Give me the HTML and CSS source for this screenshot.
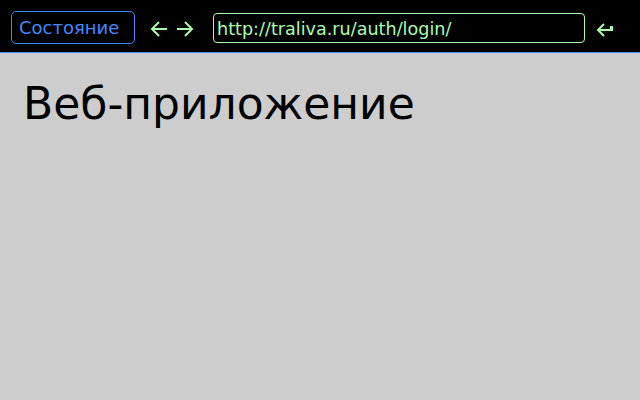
FILE: index.html
```html
<!DOCTYPE html>
<html>
<head>
<meta charset="utf-8">
<link rel="stylesheet" href="styles.css">
</head>
<body>
<header class="bar">
  <button class="state">Состояние</button>
  <div class="nav">
    <svg class="arrow" width="18" height="16" viewBox="0 0 18 16" aria-label="назад"><path d="M2 8H17M9 1L2 8L9 15" fill="none" stroke="#aaffaa" stroke-width="2"/></svg>
    <svg class="arrow" width="18" height="16" viewBox="0 0 18 16" aria-label="вперёд"><path d="M1 8H16M9 1L16 8L9 15" fill="none" stroke="#aaffaa" stroke-width="2"/></svg>
  </div>
  <div class="url">http://traliva.ru/auth/login/</div>
  <svg class="go" width="18" height="16" viewBox="0 0 18 16" aria-label="перейти"><path d="M2 8H16M8 2L2 8L8 14" fill="none" stroke="#aaffaa" stroke-width="2"/><rect x="14" y="4" width="3" height="5" fill="#aaffaa"/></svg>
</header>
<main class="content">
  <h1 class="title">Веб-приложение</h1>
</main>
</body>
</html>
```
FILE: styles.css
```css
html, body {
  margin: 0;
  padding: 0;
  height: 100%;
}
body {
  background: #cdcdcd;
  font-family: "DejaVu Sans", sans-serif;
}
.bar {
  height: 52px;
  background: #000;
  border-bottom: 1px solid #4488ff;
  display: flex;
  align-items: flex-start;
  padding: 0 0 0 11px;
}
.state {
  margin-top: 11px;
  height: 33px;
  width: 124px;
  background: #000;
  color: #4488ff;
  border: 1px solid #4488ff;
  border-radius: 5px;
  font-family: "DejaVu Sans", sans-serif;
  font-size: 18px;
  text-align: left;
  padding: 0 0 0 7px;
}
.nav {
  display: flex;
  gap: 8px;
  margin-left: 15px;
  margin-top: 21px;
}
.url {
  margin-left: 19px;
  margin-top: 13px;
  width: 372px;
  height: 30px;
  box-sizing: border-box;
  border: 1px solid #aaffaa;
  border-radius: 4px;
  color: #aaffaa;
  font-size: 17.6px;
  line-height: 30px;
  padding-left: 3px;
  white-space: nowrap;
}
.go {
  margin-left: 11px;
  margin-top: 22px;
}
.content {
  padding: 0 23px;
}
.title {
  margin: 25px 0 0;
  font-weight: normal;
  font-size: 44px;
  line-height: 52px;
  color: #000;
}
```
